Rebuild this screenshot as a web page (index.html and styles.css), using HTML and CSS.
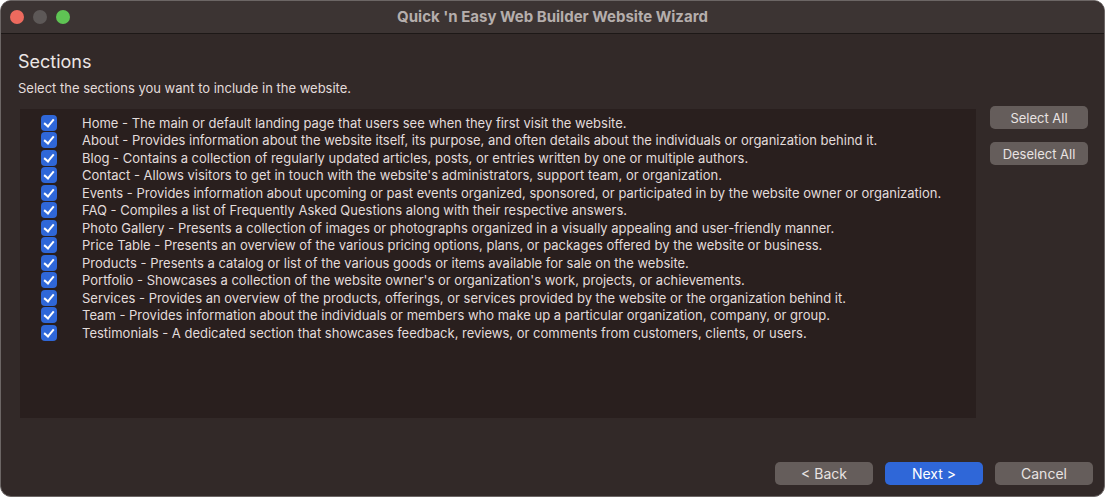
FILE: index.html
```html
<!DOCTYPE html>
<html lang="en">
  <head>
    <meta charset="UTF-8" />
    <title>Quick 'n Easy Web Builder Website Wizard</title>
    <link rel="stylesheet" href="styles.css">
  </head>
  <body>
    <div class="window">
      <header class="titlebar">
        <div class="lights">
          <span class="light red"></span>
          <span class="light gray"></span>
          <span class="light green"></span>
        </div>
        <div class="title">Quick 'n Easy Web Builder Website Wizard</div>
      </header>

      <main class="content">
        <h1>Sections</h1>
        <p class="intro">Select the sections you want to include in the website.</p>

        <div class="middle">
          <ul class="list">
            <li><span class="check"></span>Home - The main or default landing page that users see when they first visit the website.</li>
            <li><span class="check"></span>About - Provides information about the website itself, its purpose, and often details about the individuals or organization behind it.</li>
            <li><span class="check"></span>Blog - Contains a collection of regularly updated articles, posts, or entries written by one or multiple authors.</li>
            <li><span class="check"></span>Contact - Allows visitors to get in touch with the website's administrators, support team, or organization.</li>
            <li><span class="check"></span>Events - Provides information about upcoming or past events organized, sponsored, or participated in by the website owner or organization.</li>
            <li><span class="check"></span>FAQ - Compiles a list of Frequently Asked Questions along with their respective answers.</li>
            <li><span class="check"></span>Photo Gallery - Presents a collection of images or photographs organized in a visually appealing and user-friendly manner.</li>
            <li><span class="check"></span>Price Table - Presents an overview of the various pricing options, plans, or packages offered by the website or business.</li>
            <li><span class="check"></span>Products - Presents a catalog or list of the various goods or items available for sale on the website.</li>
            <li><span class="check"></span>Portfolio - Showcases a collection of the website owner's or organization's work, projects, or achievements.</li>
            <li><span class="check"></span>Services - Provides an overview of the products, offerings, or services provided by the website or the organization behind it.</li>
            <li><span class="check"></span>Team - Provides information about the individuals or members who make up a particular organization, company, or group.</li>
            <li><span class="check"></span>Testimonials - A dedicated section that showcases feedback, reviews, or comments from customers, clients, or users.</li>
          </ul>

          <div class="side">
            <button class="btn">Select All</button>
            <button class="btn">Deselect All</button>
          </div>
        </div>
      </main>

      <footer class="footer">
        <button class="btn">&lt; Back</button>
        <button class="btn primary">Next &gt;</button>
        <button class="btn">Cancel</button>
      </footer>
    </div>
  </body>
</html>
```

FILE: styles.css
```css
:root {
  --titlebar: #3c3433;
  --body: #322928;
  --panel: #291f1e;
  --text: #e2dcdb;
  --btn: #655d5b;
  --blue: #2f67d8;
  --font: Inter, "Liberation Sans", Arial, sans-serif;
}

* {
  box-sizing: border-box;
}

html,
body {
  margin: 0;
  height: 100%;
  background: #ffffff;
  font-family: var(--font);
}

.window {
  width: 1105px;
  height: 497px;
  display: flex;
  flex-direction: column;
  background: var(--body);
  border: 1px solid #6c6665;
  border-radius: 11px;
  overflow: hidden;
  color: var(--text);
}

/* title bar */
.titlebar {
  position: relative;
  height: 33px;
  flex-shrink: 0;
  background: var(--titlebar);
  border-bottom: 1px solid #1d1817;
  display: flex;
  align-items: center;
  justify-content: center;
}

.lights {
  position: absolute;
  left: 9px;
  top: 9px;
  display: flex;
  gap: 9px;
}

.light {
  width: 14px;
  height: 14px;
  border-radius: 50%;
}

.light.red { background: #ed6a5e; }
.light.gray { background: #5d5857; }
.light.green { background: #5fc454; }

.title {
  font-size: 15px;
  font-weight: 700;
  color: #b5aeac;
  margin-top: -1px;
}

/* content */
.content {
  flex: 1;
  padding: 17px 16px 0 17px;
}

h1 {
  margin: 0;
  font-size: 18px;
  font-weight: 400;
  line-height: 22px;
  color: #ebe6e5;
}

.intro {
  margin: 7px 0 0;
  font-size: 13px;
  line-height: 16px;
}

.middle {
  display: flex;
  align-items: flex-start;
  gap: 14px;
  margin-top: 13px;
}

.list {
  list-style: none;
  margin: 0 0 0 2px;
  padding: 5px 0 0 21px;
  width: 956px;
  height: 309px;
  background: var(--panel);
  font-size: 13px;
}

.list li {
  display: flex;
  align-items: center;
  height: 17.5px;
  white-space: nowrap;
}

.check {
  position: relative;
  width: 16px;
  height: 16px;
  margin-right: 25px;
  flex-shrink: 0;
  border-radius: 4px;
  background: var(--blue);
}

.check::after {
  content: "";
  position: absolute;
  left: 5px;
  top: 2px;
  width: 4px;
  height: 8px;
  border: solid #ffffff;
  border-width: 0 2px 2px 0;
  transform: rotate(40deg);
}

.side {
  display: flex;
  flex-direction: column;
  gap: 13px;
  margin-top: -3px;
}

/* buttons */
.btn {
  width: 98px;
  height: 23px;
  padding: 0;
  border: none;
  border-radius: 5px;
  background: var(--btn);
  color: #e8e3e2;
  font-family: var(--font);
  font-size: 13px;
  cursor: pointer;
}

.btn.primary {
  background: var(--blue);
  color: #ffffff;
}

.footer {
  display: flex;
  justify-content: flex-end;
  gap: 12px;
  padding: 0 11px 11px 0;
}

.footer .btn {
  font-size: 14px;
}
```
